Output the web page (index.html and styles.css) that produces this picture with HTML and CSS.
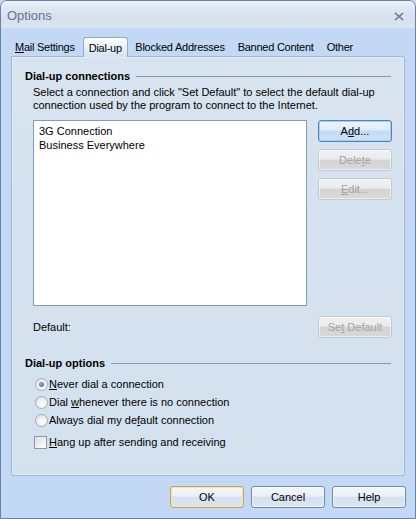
FILE: index.html
```html
<!DOCTYPE html>
<html>
<head>
<meta charset="utf-8">
<link rel="stylesheet" href="styles.css">
</head>
<body>
<div class="window">
  <div class="titlebar">
    <span class="title">Options</span>
    <svg class="close" width="10" height="9" viewBox="0 0 10 9">
      <path d="M1.5 1.5 L8.5 7.5 M8.5 1.5 L1.5 7.5" stroke="#e4ecf6" stroke-width="3" stroke-linecap="square"/>
      <path d="M1.5 1.5 L8.5 7.5 M8.5 1.5 L1.5 7.5" stroke="#74869f" stroke-width="1.8" stroke-linecap="square"/>
    </svg>
  </div>
  <div class="client">
    <div class="tabs">
      <div class="tab first"><u>M</u>ail Settings</div>
      <div class="tab active">Dial-up</div>
      <div class="tab">Blocked Addresses</div>
      <div class="tab">Banned Content</div>
      <div class="tab">Other</div>
    </div>
    <div class="panel">
      <div class="group-head"><span>Dial-up connections</span><i class="rule"></i></div>
      <p class="desc">Select a connection and click "Set Default" to select the default dial-up<br>connection used by the program to connect to the Internet.</p>
      <div class="conn-row">
        <div class="list">
          <div class="item">3G Connection</div>
          <div class="item">Business Everywhere</div>
        </div>
        <div class="side-buttons">
          <button class="btn focus">A<u>d</u>d...</button>
          <button class="btn" disabled>Dele<u>t</u>e</button>
          <button class="btn" disabled><u>E</u>dit...</button>
        </div>
      </div>
      <div class="default-row">
        <span>Default:</span>
        <button class="btn" disabled>Se<u>t</u> Default</button>
      </div>
      <div class="group-head options-head"><span>Dial-up options</span><i class="rule"></i></div>
      <div class="options">
        <div class="opt"><span class="radio checked"></span><span><u>N</u>ever dial a connection</span></div>
        <div class="opt"><span class="radio"></span><span>Dial <u>w</u>henever there is no connection</span></div>
        <div class="opt"><span class="radio"></span><span>Always dial my de<u>f</u>ault connection</span></div>
      </div>
      <div class="check-row"><span class="check"></span><span><u>H</u>ang up after sending and receiving</span></div>
    </div>
    <div class="footer">
      <button class="btn default">OK</button>
      <button class="btn">Cancel</button>
      <button class="btn">Help</button>
    </div>
  </div>
</div>
</body>
</html>
```

FILE: styles.css
```css
* { box-sizing: border-box; }
html, body { margin: 0; padding: 0; }
body {
  width: 416px;
  height: 519px;
  font-family: "Liberation Sans", Arial, sans-serif;
  font-size: 11px;
  color: #000;
  background: #c4d9f5;
}
.window {
  width: 416px;
  height: 519px;
  border: 1px solid #6a81a3;
  border-radius: 7px 7px 0 0;
  background: #c3d8f5;
  display: flex;
  flex-direction: column;
  overflow: hidden;
}
.titlebar {
  height: 28px;
  flex: none;
  display: flex;
  align-items: center;
  justify-content: space-between;
  padding: 0 11px 0 6px;
  background: linear-gradient(#edf2f9 0%, #dde6f2 30%, #d6e1ee 70%, #dbe5f1 90%, #c9dbf3 100%);
}
.title {
  font-size: 13px;
  color: #64738a;
  padding-top: 1px;
}
.close { display: block; margin-top: 2px; }
.client {
  flex: 1;
  display: flex;
  flex-direction: column;
  padding: 8px 10px 0 10px;
}
.tabs {
  display: flex;
  align-items: flex-end;
  height: 19px;
  position: relative;
  z-index: 2;
}
.tab {
  height: 19px;
  line-height: 20px;
  padding: 0 6.5px;
  white-space: nowrap;
  letter-spacing: -0.25px;
}
.tab.first { padding: 0 6px 0 4px; }
.tab.active {
  height: 20px;
  line-height: 20px;
  padding: 0 5px;
  margin: 0 1px -1px 2px;
  border: 1px solid #92aacb;
  border-bottom: none;
  border-radius: 3px 3px 0 0;
  background: linear-gradient(#fdfeff, #e4edf6 60%, #d5e2ef);
}
.panel {
  width: 394px;
  height: 420px;
  flex: none;
  border: 1px solid #9db6d6;
  border-radius: 0 3px 3px 3px;
  background: linear-gradient(#d7e3ef, #d3e0ee);
  box-shadow: inset 0 0 0 1px #e2ecf6;
  padding: 12px 12px 0 13px;
  display: flex;
  flex-direction: column;
}
.group-head {
  display: flex;
  align-items: center;
  height: 13px;
  font-weight: bold;
  white-space: nowrap;
}
.group-head .rule {
  flex: 1;
  height: 1px;
  margin: 1px 1px 0 6px;
  background: #8b98a8;
}
.desc {
  margin: 4px 0 0 8px;
  line-height: 13px;
  white-space: nowrap;
}
.conn-row {
  display: flex;
  gap: 11px;
  margin: 8px 0 0 8px;
}
.list {
  width: 274px;
  height: 186px;
  background: #fff;
  border: 1px solid #7f9db9;
  padding: 3px 0 0 5px;
}
.item {
  height: 14px;
  line-height: 14px;
}
.side-buttons {
  display: flex;
  flex-direction: column;
  gap: 7px;
}
.btn {
  width: 74px;
  height: 22px;
  padding: 0;
  font-family: inherit;
  font-size: 11px;
  color: #000;
  border: 1px solid #7189ab;
  border-radius: 3px;
  background: linear-gradient(#f3f7fc 0%, #e8eff8 46%, #d4e0ee 50%, #dbe6f2 100%);
  box-shadow: inset 0 0 0 1px rgba(255,255,255,0.55);
}
.btn.focus {
  border-color: #4a83bd;
  background: linear-gradient(#eef6fe 0%, #dcebfa 46%, #c3dbf3 50%, #cde2f7 100%);
  box-shadow: inset 0 0 0 1px #a9cdf0;
}
.btn.default {
  border-color: #c7a45a;
  box-shadow: inset 0 0 0 1px #f6e3a6;
}
.btn:disabled {
  color: #a3a3a3;
  border-color: #c4cad2;
  background: linear-gradient(#f1f1f1 0%, #ebebeb 46%, #d4d4d4 50%, #d9d9d9 100%);
  box-shadow: inset 0 0 0 1px rgba(255,255,255,0.5);
}
.default-row {
  display: flex;
  align-items: center;
  justify-content: space-between;
  margin: 10px 0 0 8px;
}
.options-head { margin-top: 18px; }
.options {
  margin: 6px 0 0 10px;
  display: flex;
  flex-direction: column;
}
.opt {
  height: 18px;
  display: flex;
  align-items: center;
  gap: 1px;
}
.radio {
  width: 13px;
  height: 13px;
  border-radius: 50%;
  border: 1px solid #a3aebd;
  background: radial-gradient(circle at 60% 65%, #ffffff 0%, #eef1f5 45%, #d2d8e1 100%);
  display: flex;
  align-items: center;
  justify-content: center;
  flex: none;
}
.radio.checked::after {
  content: "";
  width: 5px;
  height: 5px;
  border-radius: 50%;
  background: radial-gradient(circle at 40% 40%, #9aabc2, #4a5a72);
}
.check-row {
  margin: 4px 0 0 9px;
  height: 18px;
  display: flex;
  align-items: center;
  gap: 2px;
}
.check {
  width: 13px;
  height: 13px;
  border: 1px solid #8c99aa;
  background: linear-gradient(135deg, #d9dfe7, #ffffff);
  flex: none;
}
.footer {
  display: flex;
  justify-content: flex-end;
  gap: 7px;
  margin: 10px -1px 0 0;
}
u { text-decoration: underline; text-underline-offset: 1px; }
```
